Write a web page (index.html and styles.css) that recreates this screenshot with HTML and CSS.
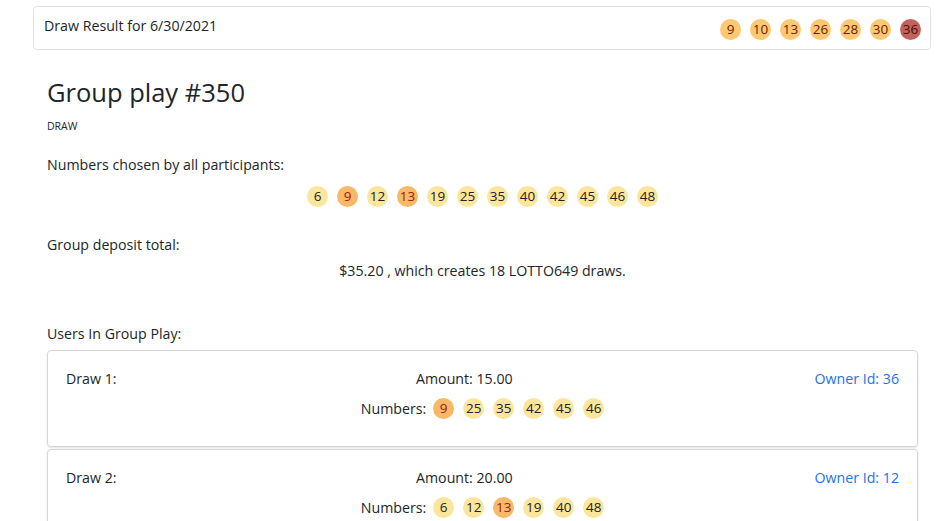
FILE: index.html
```html
<!DOCTYPE html>
<html>
<head>
<meta charset="utf-8">
<link rel="stylesheet" href="styles.css">
</head>
<body>
<div class="result-bar">
  <div class="result-title">Draw Result for 6/30/2021</div>
  <div class="balls">
    <span class="ball win">9</span>
    <span class="ball win">10</span>
    <span class="ball win">13</span>
    <span class="ball win">26</span>
    <span class="ball win">28</span>
    <span class="ball win">30</span>
    <span class="ball bonus">36</span>
  </div>
</div>
<main class="page">
  <h1 class="title">Group play #350</h1>
  <div class="sub">DRAW</div>
  <div class="label chosen-label">Numbers chosen by all participants:</div>
  <div class="balls center">
    <span class="ball">6</span>
    <span class="ball hit">9</span>
    <span class="ball">12</span>
    <span class="ball hit">13</span>
    <span class="ball">19</span>
    <span class="ball">25</span>
    <span class="ball">35</span>
    <span class="ball">40</span>
    <span class="ball">42</span>
    <span class="ball">45</span>
    <span class="ball">46</span>
    <span class="ball">48</span>
  </div>
  <div class="label deposit-label">Group deposit total:</div>
  <div class="deposit">$35.20 , which creates 18 LOTTO649 draws.</div>
  <div class="label users-label">Users In Group Play:</div>
  <div class="card">
    <div class="card-row">
      <div class="draw-name">Draw 1:</div>
      <div class="amount">Amount: 15.00</div>
      <div class="owner">Owner Id: 36</div>
    </div>
    <div class="numbers">
      <span class="num-label">Numbers:</span>
      <span class="ball hit">9</span>
      <span class="ball">25</span>
      <span class="ball">35</span>
      <span class="ball">42</span>
      <span class="ball">45</span>
      <span class="ball">46</span>
    </div>
  </div>
  <div class="card">
    <div class="card-row">
      <div class="draw-name">Draw 2:</div>
      <div class="amount">Amount: 20.00</div>
      <div class="owner">Owner Id: 12</div>
    </div>
    <div class="numbers">
      <span class="num-label">Numbers:</span>
      <span class="ball">6</span>
      <span class="ball">12</span>
      <span class="ball hit">13</span>
      <span class="ball">19</span>
      <span class="ball">40</span>
      <span class="ball">48</span>
    </div>
  </div>
</main>
</body>
</html>
```
FILE: styles.css
```css
* { box-sizing: border-box; }
html, body { margin: 0; padding: 0; background: #fff; }
body {
  font-family: "Open Sans", "Noto Sans", "Liberation Sans", sans-serif;
  color: #212529;
  font-size: 14.2px;
  overflow: hidden;
  height: 521px;
}
.result-bar {
  margin: 6px 9px 0 33px;
  height: 44px;
  border: 1px solid #e2e2e2;
  border-radius: 4px;
  display: flex;
  justify-content: space-between;
  align-items: flex-start;
  padding: 9px 9px 0 10px;
}
.result-title { line-height: 20px; }
.balls { display: flex; gap: 9px; }
.result-bar .balls { margin-top: 3px; }
.ball {
  width: 21px;
  height: 21px;
  border-radius: 50%;
  background: #fce69c;
  color: #222;
  font-size: 13.5px;
  display: inline-flex;
  align-items: center;
  justify-content: center;
  line-height: 1;
}
.ball.win { background: #fdc872; color: #6e1a08; }
.ball.bonus { background: #c2625b; color: #4e0e0a; }
.ball.hit { background: #f7b868; color: #9c1c0c; }
.page { padding: 0 22px 0 47px; }
.title {
  font-size: 25.5px;
  font-weight: 400;
  margin: 25px 0 0;
  line-height: 34px;
}
.sub { font-size: 10.5px; margin-top: 10px; line-height: 14px; }
.label { line-height: 20px; }
.chosen-label { margin-top: 22px; }
.balls.center { justify-content: center; margin-top: 11px; }
.deposit-label { margin-top: 28px; }
.deposit { text-align: center; margin-top: 6px; line-height: 20px; }
.users-label { margin-top: 43px; }
.card {
  margin-top: 6px;
  border: 1px solid #d6d6d6;
  border-radius: 4px;
  box-shadow: 0 1px 2px rgba(0,0,0,0.12);
  padding: 18px 18px 0 18px;
  height: 97px;
}
.card + .card { margin-top: 2px; }
.card-row {
  display: grid;
  grid-template-columns: 350px 1fr auto;
  align-items: center;
  line-height: 20px;
}
.owner { text-align: right; color: #1a73e8; }
.numbers {
  display: flex;
  justify-content: center;
  align-items: center;
  gap: 9px;
  margin-top: 9px;
}
.num-label { margin-right: -2px; }
```
